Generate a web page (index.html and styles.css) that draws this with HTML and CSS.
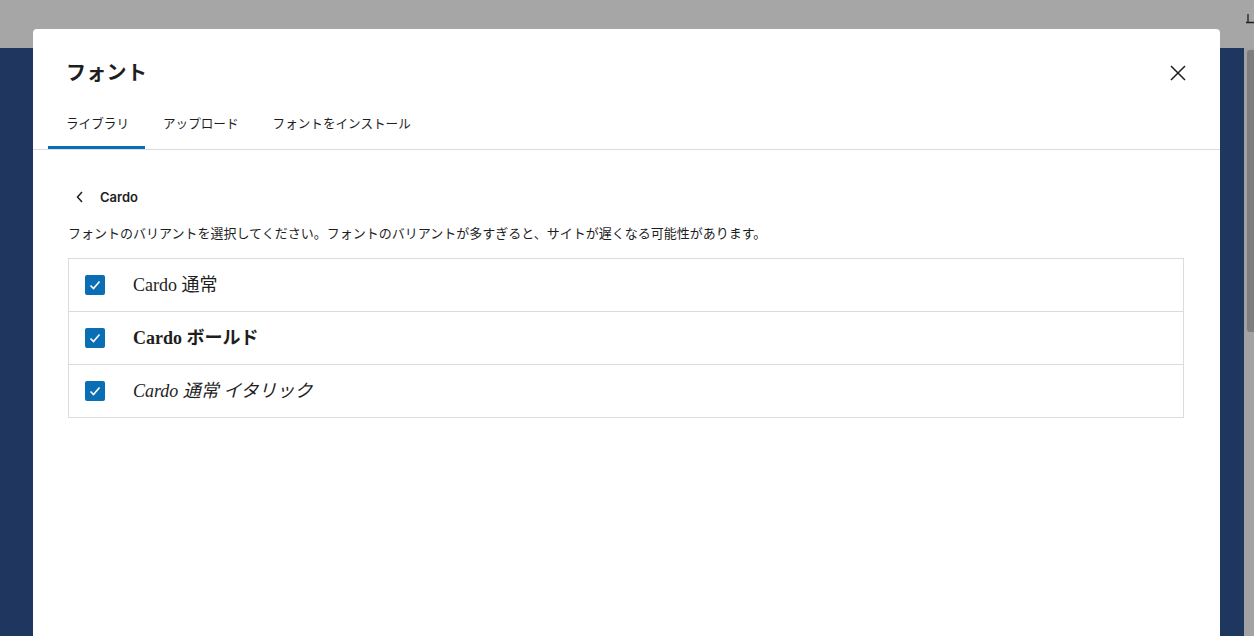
FILE: index.html
```html
<!DOCTYPE html>
<html lang="ja">
<head>
<meta charset="utf-8">
<link rel="stylesheet" href="styles.css">
</head>
<body>
<div class="screen">
  <div class="topbar">
    <svg class="corner-icon" width="8" height="14" viewBox="0 0 8 14"><path d="M2 3 V11.5 H8 M2 11.5 H0" fill="none" stroke="#1e1e1e" stroke-width="1.3"/></svg>
  </div>
  <div class="workspace">
    <div class="canvas"></div>
    <div class="scrollbar"><div class="thumb"></div></div>
  </div>
</div>

<div class="modal">
  <div class="modal-header">
    <h1 class="modal-title">フォント</h1>
    <button class="close" aria-label="閉じる">
      <svg width="24" height="24" viewBox="0 0 24 24"><path d="M5 5 L19 19 M19 5 L5 19" stroke="#1e1e1e" stroke-width="1.5" fill="none"/></svg>
    </button>
  </div>
  <div class="tabs">
    <div class="tab active">ライブラリ</div>
    <div class="tab">アップロード</div>
    <div class="tab">フォントをインストール</div>
  </div>
  <div class="modal-body">
    <div class="back-row">
      <svg class="chevron" width="24" height="24" viewBox="0 0 24 24"><path d="M14 7 L9.5 12 L14 17" stroke="#1e1e1e" stroke-width="1.5" fill="none"/></svg>
      <span class="font-name">Cardo</span>
    </div>
    <p class="desc">フォントのバリアントを選択してください。フォントのバリアントが多すぎると、サイトが遅くなる可能性があります。</p>
    <div class="variants">
      <div class="variant">
        <span class="checkbox"><svg width="20" height="20" viewBox="0 0 20 20"><path d="M5.5 10.5 L8.5 13.5 L14.5 6.5" stroke="#fff" stroke-width="1.6" fill="none"/></svg></span>
        <span class="label">Cardo 通常</span>
      </div>
      <div class="variant">
        <span class="checkbox"><svg width="20" height="20" viewBox="0 0 20 20"><path d="M5.5 10.5 L8.5 13.5 L14.5 6.5" stroke="#fff" stroke-width="1.6" fill="none"/></svg></span>
        <span class="label bold">Cardo ボールド</span>
      </div>
      <div class="variant">
        <span class="checkbox"><svg width="20" height="20" viewBox="0 0 20 20"><path d="M5.5 10.5 L8.5 13.5 L14.5 6.5" stroke="#fff" stroke-width="1.6" fill="none"/></svg></span>
        <span class="label italic">Cardo 通常 イタリック</span>
      </div>
    </div>
  </div>
</div>
</body>
</html>
```

FILE: styles.css
```css
* { box-sizing: border-box; }

html, body {
  margin: 0;
  padding: 0;
  width: 1254px;
  height: 636px;
  overflow: hidden;
}

body {
  font-family: "Noto Sans CJK JP", "Noto Sans", sans-serif;
  color: #1e1e1e;
  position: relative;
}

.screen {
  display: flex;
  flex-direction: column;
  height: 636px;
}

.topbar {
  height: 48px;
  background: #a6a6a6;
  position: relative;
  flex: none;
}

.corner-icon {
  position: absolute;
  right: 0;
  top: 11px;
}

.workspace {
  flex: 1;
  display: flex;
}

.canvas {
  flex: 1;
  background: #1f365e;
}

.scrollbar {
  width: 10px;
  background: #a3a3a3;
  padding: 2px 0 0 3px;
}

.thumb {
  width: 7px;
  height: 282px;
  background: #7e7e7e;
  border-radius: 3px 0 0 3px;
}

.modal {
  position: absolute;
  left: 33px;
  top: 29px;
  width: 1187px;
  height: 607px;
  background: #fff;
  border-radius: 4px 4px 0 0;
  display: flex;
  flex-direction: column;
  overflow: hidden;
}

.modal-header {
  display: flex;
  align-items: center;
  justify-content: space-between;
  padding: 0 30px 0 33px;
  height: 71px;
  flex: none;
}

.modal-title {
  margin: 0;
  font-size: 20px;
  font-weight: 700;
  line-height: 1;
  padding-top: 15px;
  letter-spacing: 0.3px;
}

.close {
  border: 0;
  background: none;
  padding: 0;
  width: 24px;
  height: 24px;
  margin-top: 17px;
  display: flex;
}

.tabs {
  display: flex;
  padding-left: 15px;
  border-bottom: 1px solid #dcdcdc;
  height: 50px;
  flex: none;
}

.tab {
  padding: 0 16px 0 18px;
  font-size: 12.6px;
  line-height: 46px;
  height: 49px;
  color: #1e1e1e;
}

.tab.active {
  box-shadow: inset 0 -3px 0 #0a6eb4;
}

.modal-body {
  padding: 35px 36px 0 35px;
}

.back-row {
  display: flex;
  align-items: center;
  height: 24px;
}

.chevron {
  margin-right: 8px;
}

.font-name {
  font-size: 13px;
  font-weight: 600;
  font-family: "Inter", "Noto Sans", sans-serif;
}

.desc {
  margin: 14px 0 0;
  font-size: 13px;
  line-height: 20px;
}

.variants {
  margin-top: 15px;
  border: 1px solid #dcdcdc;
}

.variant {
  display: flex;
  align-items: center;
  height: 53px;
  padding-left: 16px;
  border-top: 1px solid #dcdcdc;
}

.variant:first-child {
  border-top: 0;
  height: 52px;
}

.checkbox {
  width: 20px;
  height: 20px;
  background: #0a6eb4;
  border-radius: 2px;
  display: flex;
  margin-right: 28px;
  flex: none;
}

.label {
  font-family: "Liberation Serif", "Noto Sans CJK JP", serif;
  font-size: 18px;
  line-height: 24px;
}

.label.bold { font-weight: 700; }
.label.italic { font-style: italic; }
```
